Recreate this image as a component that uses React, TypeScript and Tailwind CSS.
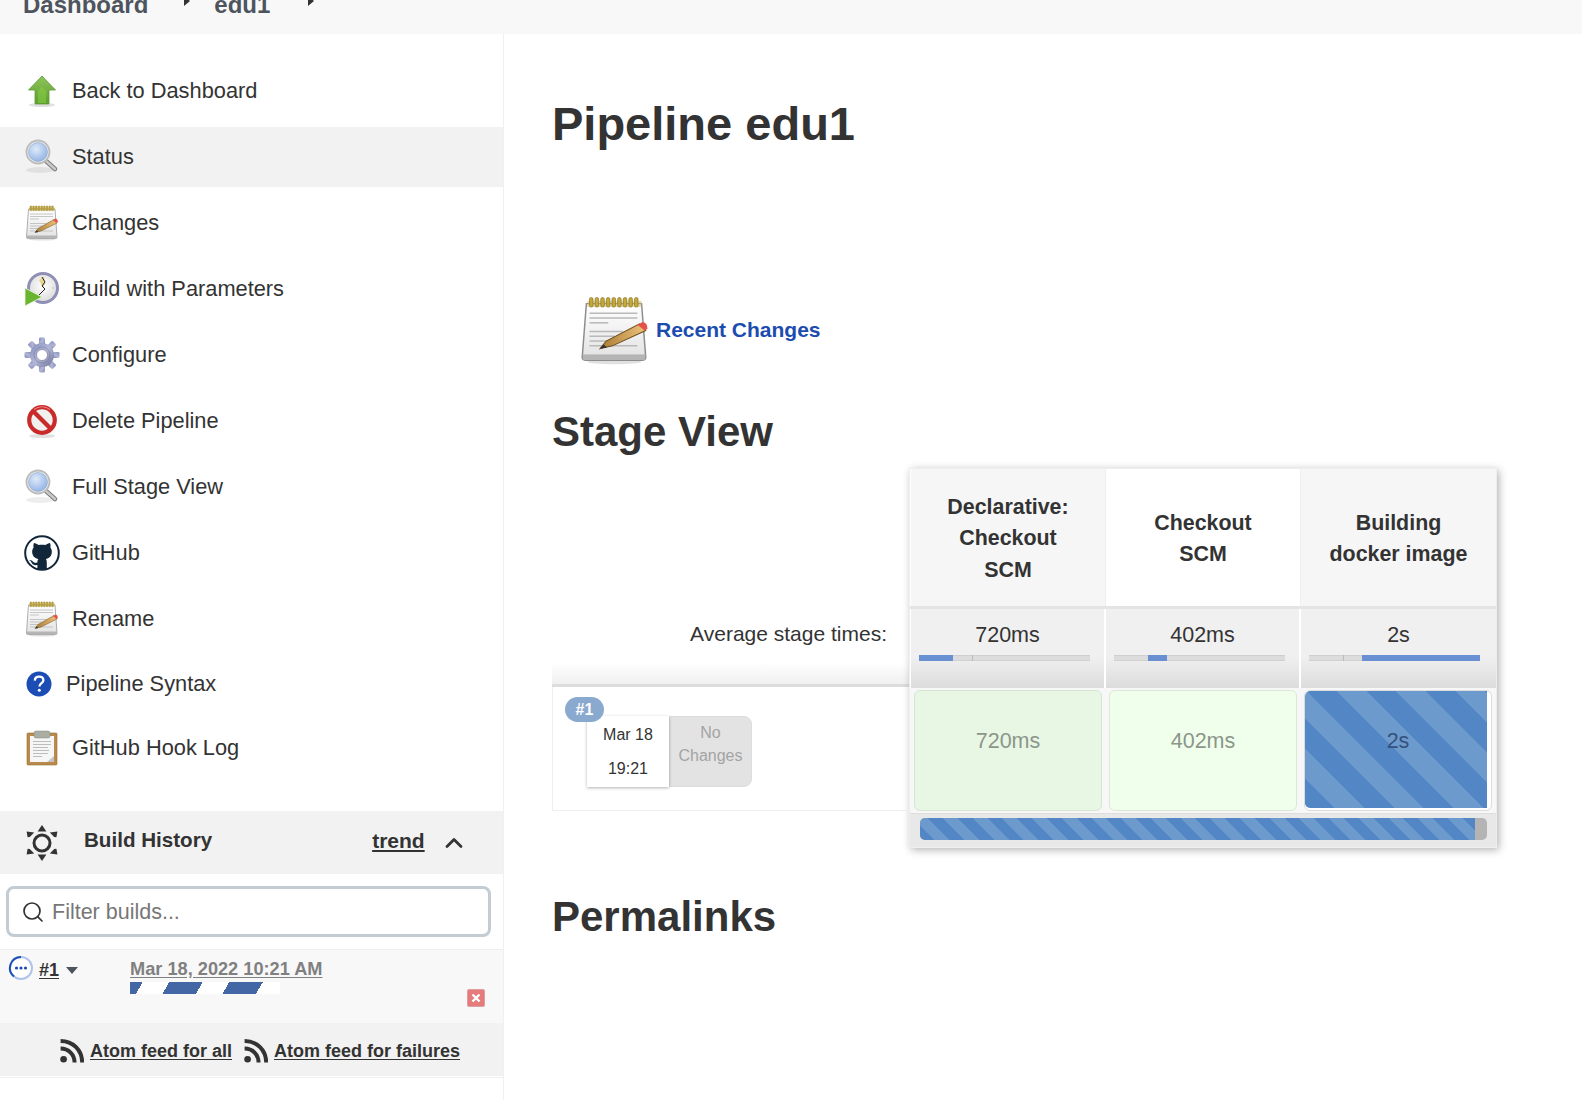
import { ChevronUp, Search } from 'lucide-react'
import type { ReactNode } from 'react'

const stripesBig =
  'bg-[repeating-linear-gradient(45deg,#5386c4_0,#5386c4_21px,#6d9acd_21px,#6d9acd_42px)]'

function ArrowIcon() {
  return (
    <svg viewBox="0 0 36 36" className="w-9 h-9">
      <defs>
        <linearGradient id="arrow-g" x1="0" y1="0" x2="0" y2="1">
          <stop offset="0" stopColor="#8fc45c" />
          <stop offset="1" stopColor="#5c9e2c" />
        </linearGradient>
      </defs>
      <ellipse cx="18" cy="32" rx="13" ry="2" fill="#000" opacity="0.12" />
      <path d="M18 3 L31.5 17 H25 V31 H11 V17 H4.5 Z" fill="url(#arrow-g)" stroke="#5f9a3b" strokeWidth="0.8" />
      <path d="M14 18 L18 13 L22 18 V30 H14 Z" fill="#86cc42" opacity="0.6" />
    </svg>
  )
}

function GlassIcon({ id }: { id: string }) {
  return (
    <svg viewBox="0 0 36 36" className="w-9 h-9">
      <defs>
        <radialGradient id={id} cx="0.4" cy="0.35" r="0.7">
          <stop offset="0" stopColor="#dfeafa" />
          <stop offset="1" stopColor="#90b2e4" />
        </radialGradient>
      </defs>
      <ellipse cx="16" cy="31" rx="14" ry="3" fill="#000" opacity="0.07" />
      <path d="M22 22 L31 30" stroke="#777" strokeWidth="4.5" strokeLinecap="round" />
      <path d="M22 22 L31 30" stroke="#c9c9c9" strokeWidth="2.6" strokeLinecap="round" />
      <circle cx="14" cy="13" r="11.5" fill="#eee" stroke="#bcbcbc" strokeWidth="1.8" />
      <circle cx="14" cy="13" r="9.5" fill={`url(#${id})`} stroke="#8ea7cc" strokeWidth="0.6" />
    </svg>
  )
}

function NotepadIcon({ id, big }: { id: string; big?: boolean }) {
  return (
    <svg
      viewBox="0 0 36 36"
      preserveAspectRatio="none"
      className={big ? 'w-[75px] h-[69px] -my-[1.5px] shrink-0' : 'w-9 h-9'}
    >
      <defs>
        <linearGradient id={id} x1="0" y1="0" x2="0" y2="1">
          <stop offset="0" stopColor="#ffffff" />
          <stop offset="1" stopColor="#e2e2e2" />
        </linearGradient>
        <linearGradient id={`${id}-p`} x1="0" y1="0" x2="1" y2="0">
          <stop offset="0" stopColor="#a87b35" />
          <stop offset="1" stopColor="#eec27a" />
        </linearGradient>
      </defs>
      <ellipse cx="18" cy="34.4" rx="13" ry="1.2" fill="#000" opacity="0.12" />
      <path d="M4.5 4 H31 L33 32 Q33 33.5 31.5 33.5 H4 Q2.5 33.5 2.5 32 Z" fill={`url(#${id})`} stroke="#8c8c8c" strokeWidth="0.7" />
      <rect x="2.8" y="30.5" width="30" height="2.8" fill="#b5b5b5" />
      <rect x="5" y="2.5" width="26" height="3.2" fill="#cdb560" opacity="0.5" />
      {[6, 8.7, 11.4, 14.1, 16.8, 19.5, 22.2, 24.9, 27.6].map(x => (
        <rect key={x} x={x} y="0.8" width="1.7" height="5" rx="0.8" fill="#c4a93a" stroke="#7d6a1c" strokeWidth="0.3" />
      ))}
      <g stroke="#b9b9b9" strokeWidth="0.8">
        <path d="M6 9 H29" />
        <path d="M6 11.5 H29" />
        <path d="M6 14 H15" />
        <path d="M6 18.5 H22" />
        <path d="M6 21 H18" />
        <path d="M6 23.5 H16" />
        <path d="M6 26 H29" />
      </g>
      <path d="M11 27.5 L14 23.5 L30 14.5 L33 18 L17 26 Z" fill={`url(#${id}-p)`} stroke="#6d4d1a" strokeWidth="0.5" />
      <path d="M29 15 L31.5 13.6 Q34 14.2 33.8 17.2 L32.4 18 Z" fill="#e4534a" />
      <path d="M11 27.5 L12.7 25.2 L14.4 26.9 Z" fill="#333" />
    </svg>
  )
}

function ClockIcon() {
  return (
    <svg viewBox="0 0 36 36" className="w-9 h-9">
      <defs>
        <radialGradient id="clock-g" cx="0.5" cy="0.4" r="0.6">
          <stop offset="0" stopColor="#ffffff" />
          <stop offset="1" stopColor="#dddddd" />
        </radialGradient>
      </defs>
      <circle cx="19" cy="17" r="16" fill="#8f8fb5" />
      <circle cx="19" cy="17" r="13" fill="url(#clock-g)" />
      <path d="M19 17 L15 9 L20 5 L21 13 Z" fill="#e6d690" />
      <path d="M18 6 L21 11 L18 15 L21 18 L15 24" fill="none" stroke="#222" strokeWidth="1" />
      <circle cx="29" cy="17" r="0.8" fill="#bbb" />
      <path d="M1 17 L18 26 L1 35 Z" fill="#6ab52f" stroke="#eef7e4" strokeWidth="0.8" />
    </svg>
  )
}

function GearIcon() {
  const teeth = [0, 45, 90, 135, 180, 225, 270, 315]
  return (
    <svg viewBox="0 0 36 36" className="w-9 h-9">
      <defs>
        <linearGradient id="gear-g" x1="0" y1="0" x2="1" y2="1">
          <stop offset="0" stopColor="#858cbd" />
          <stop offset="0.5" stopColor="#b3b7d6" />
          <stop offset="1" stopColor="#6a6f96" />
        </linearGradient>
      </defs>
      <g fill="url(#gear-g)">
        {teeth.map(a => (
          <rect key={a} x="15" y="0.5" width="6" height="9" rx="1.4" transform={`rotate(${a} 18 18)`} />
        ))}
        <circle cx="18" cy="18" r="12" />
      </g>
      <circle cx="18" cy="18" r="8" fill="none" stroke="#6e7396" strokeWidth="1" opacity="0.5" />
      <circle cx="18" cy="18" r="5.5" fill="#fff" stroke="#6e7396" strokeWidth="0.6" />
    </svg>
  )
}

function NoIcon() {
  return (
    <svg viewBox="0 0 36 36" className="w-9 h-9">
      <ellipse cx="18" cy="33" rx="13" ry="2" fill="#000" opacity="0.12" />
      <circle cx="18" cy="17" r="12.8" fill="#f0f0f0" stroke="#c92a2a" strokeWidth="4.2" />
      <path d="M9 8 L27 26" stroke="#c92a2a" strokeWidth="4.4" />
      <path d="M10 6.5 A13 13 0 0 1 26 6.5" fill="none" stroke="#e98080" strokeWidth="1.2" />
    </svg>
  )
}

function GithubIcon() {
  return (
    <svg viewBox="0 0 36 36" className="w-9 h-9">
      <circle cx="18" cy="18" r="16.8" fill="#fff" stroke="#12263a" strokeWidth="2" />
      <path
        d="M10 8 C11.5 8 13 9 14.5 10 C16.5 9.5 19.5 9.5 21.5 10 C23 9 24.5 8 26 8 C26.6 9.5 26.8 11 26.4 12.4 C27.6 14 28 15.5 27.8 17.5 C27.4 21.5 25 23.4 21.8 24 C22.6 25 22.8 26 22.8 27.4 V34 H13.4 V30 C10.5 30.5 8.5 29.6 7.5 27.5 C7 26.4 6 25.6 5 25 C7 24.8 8.4 25.8 9.4 27 C10.6 28 12 28 13.4 27.6 C13.4 26 13.6 24.8 14.4 24 C11.2 23.4 8.6 21.5 8.2 17.5 C8 15.5 8.4 14 9.6 12.4 C9.2 11 9.4 9.5 10 8 Z"
        fill="#12263a"
      />
    </svg>
  )
}

function HelpIcon() {
  return (
    <svg viewBox="0 0 30 30" className="w-[30px] h-[30px]">
      <circle cx="15" cy="15" r="12.5" fill="#1c4db4" />
      <path d="M10.8 11.6 C10.9 8.9 12.7 7.6 15.1 7.6 C17.6 7.6 19.4 9 19.4 11.2 C19.4 14.2 15.4 14.2 15.4 17.6" fill="none" stroke="#fff" strokeWidth="2.3" />
      <circle cx="15.3" cy="21.3" r="1.5" fill="#fff" />
    </svg>
  )
}

function ClipboardIcon() {
  return (
    <svg viewBox="0 0 36 36" className="w-9 h-9">
      <rect x="3" y="3" width="30" height="32" rx="1" fill="#b98a4c" stroke="#96702f" strokeWidth="0.6" />
      <path d="M6 6 H30 V32 H6 Z" fill="#f6f6f6" />
      <rect x="10" y="1" width="16" height="7" rx="2" fill="#a9ada2" stroke="#85887e" strokeWidth="0.5" />
      <g stroke="#bdbdbd" strokeWidth="1">
        <path d="M9 11.5 H27" />
        <path d="M9 14.5 H27" />
        <path d="M9 17.5 H24" />
        <path d="M9 20.5 H25" />
        <path d="M9 23.5 H24" />
        <path d="M9 26.5 H18" />
      </g>
      <path d="M23 32 L30 26 V32 Z" fill="#c4c4c4" />
    </svg>
  )
}

function HistoryIcon() {
  return (
    <svg viewBox="0 0 36 36" className="w-9 h-9">
      <circle cx="18" cy="18" r="8" fill="none" stroke="#333" strokeWidth="3" />
      <g fill="#333">
        <path d="M18 0 L22.4 6.4 H13.6 Z" />
        <path d="M18 36 L22.4 29.6 H13.6 Z" />
        <path d="M2.6 6.6 L10.2 7.4 L5.8 12 L3.6 12.2 Z" />
        <path d="M33.4 6.6 L25.8 7.4 L30.2 12 L32.4 12.2 Z" />
        <path d="M2.6 29.4 L10.2 28.6 L5.8 24 L3.6 23.8 Z" />
        <path d="M33.4 29.4 L25.8 28.6 L30.2 24 L32.4 23.8 Z" />
      </g>
    </svg>
  )
}

function RssIcon() {
  return (
    <svg viewBox="0 0 24 24" className="w-6 h-6 shrink-0">
      <circle cx="3.6" cy="20.2" r="3.3" fill="#333" />
      <path d="M0.6 9.6 C8.6 9.6 14.6 15.6 14.6 23.6" fill="none" stroke="#333" strokeWidth="4" />
      <path d="M0.6 2 C13 2 22.2 11.2 22.2 23.6" fill="none" stroke="#333" strokeWidth="4" />
    </svg>
  )
}

function Triangle() {
  return <div className="w-0 h-0 border-y-[5px] border-y-transparent border-l-[6px] border-l-[#333]" />
}

function NavItem({ icon, label, active, className }: { icon: ReactNode; label: string; active?: boolean; className?: string }) {
  return (
    <a className={`flex items-center h-[60px] pl-6 gap-3 ${active ? 'bg-[#f2f2f2]' : ''} ${className ?? ''}`}>
      {icon}
      <span className="text-[21.8px] text-[#333]">{label}</span>
    </a>
  )
}

function MiniBar({ from, width, tick }: { from: number; width: number; tick: number }) {
  return (
    <div className="relative h-[6px] w-[171px] ml-[8px] bg-[#dcdcdc] border-y border-[#d0d0d0]">
      <div className="absolute top-[-1px] h-[6px] w-px bg-[#bbb]" style={{ left: tick }} />
      <div className="absolute top-[-1px] h-[6px] bg-[#6a90d4]" style={{ left: from, width }} />
    </div>
  )
}

function AvgCell({ time, from, width, tick, className }: { time: string; from: number; width: number; tick: number; className?: string }) {
  return (
    <div className={`flex flex-col h-full pt-3 bg-gradient-to-b from-[#f0f0f0] from-60% to-[#dcdcdc] ${className ?? ''}`}>
      <div className="text-center text-[21.5px] leading-[28px] text-[#333]">{time}</div>
      <div className="mt-[6px]">
        <MiniBar from={from} width={width} tick={tick} />
      </div>
    </div>
  )
}

export default function App() {
  return (
    <div className="w-[1582px] h-[1100px] overflow-hidden bg-white font-['Liberation_Sans',Arial,sans-serif] text-[#333]">
      {/* breadcrumbs, page is scrolled so it is cut off */}
      <div className="h-[34px] bg-[#f8f8f8] overflow-hidden">
        <div className="flex items-center pl-[23px] mt-[-12px] h-[34px] text-[24px] font-bold text-[#4d545d]">
          <span>Dashboard</span>
          <span className="ml-[36px] mt-[-9px]"><Triangle /></span>
          <span className="ml-[24px]">edu1</span>
          <span className="ml-[38px] mt-[-9px]"><Triangle /></span>
        </div>
      </div>

      <div className="flex h-[1066px]">
        <aside className="w-[504px] shrink-0 border-r border-[#f0f0f0] flex flex-col">
          <div className="flex flex-col gap-[6px] pt-[27px]">
            <NavItem icon={<ArrowIcon />} label="Back to Dashboard" />
            <NavItem icon={<GlassIcon id="glass-1" />} label="Status" active />
            <NavItem icon={<NotepadIcon id="note-1" />} label="Changes" />
            <NavItem icon={<ClockIcon />} label="Build with Parameters" />
            <NavItem icon={<GearIcon />} label="Configure" />
            <NavItem icon={<NoIcon />} label="Delete Pipeline" />
            <NavItem icon={<GlassIcon id="glass-2" />} label="Full Stage View" />
            <NavItem icon={<GithubIcon />} label="GitHub" />
            <NavItem icon={<NotepadIcon id="note-2" />} label="Rename" />
            <NavItem icon={<HelpIcon />} label="Pipeline Syntax" className="-mt-[1px]" />
            <NavItem icon={<ClipboardIcon />} label="GitHub Hook Log" className="-mt-[2px]" />
          </div>

          <div className="mt-[33px] h-[63px] bg-[#f2f2f2] flex items-center pl-6">
            <HistoryIcon />
            <span className="ml-[24px] mt-[-4px] text-[20.6px] font-bold">Build History</span>
            <a className="ml-[160px] mt-[-4px] text-[21px] font-bold underline underline-offset-2">trend</a>
            <ChevronUp className="ml-[15px] w-7 h-7 text-[#333]" strokeWidth={2.4} />
          </div>

          <div className="mx-[6px] mt-3 h-[51px] w-[485px] border-[3px] border-[#c3ccd2] rounded-[8px] flex items-center pl-[12px]">
            <Search className="w-6 h-6 text-[#333]" strokeWidth={1.7} />
            <span className="ml-[7px] mt-[2px] text-[21.5px] text-[#777]">Filter builds...</span>
          </div>

          <div className="relative mt-3 h-[74px] bg-[#f8f8f8] border-t border-[#eee]">
            <div className="flex items-start">
              <svg viewBox="0 0 26 26" className="w-[26px] h-[26px] ml-[8px] mt-[5px]">
                <circle cx="13" cy="13" r="11" fill="#fff" stroke="#aec4ea" strokeWidth="2" />
                <path d="M13 2 A11 11 0 0 0 6 21.5" fill="none" stroke="#1c4db4" strokeWidth="2" />
                <circle cx="8.5" cy="13" r="1.6" fill="#1c4db4" />
                <circle cx="13" cy="13" r="1.6" fill="#1c4db4" />
                <circle cx="17.5" cy="13" r="1.6" fill="#1c4db4" />
              </svg>
              <a className="ml-[5px] mt-[7px] text-[18px] font-bold underline underline-offset-2">#1</a>
              <div className="ml-[7px] mt-[17px] w-0 h-0 border-x-[6px] border-x-transparent border-t-[7px] border-t-[#4d545d]" />
              <div className="ml-[52px] mt-[6px]">
                <a className="block text-[18.2px] font-bold text-[#808080] underline underline-offset-2 whitespace-nowrap">Mar 18, 2022 10:21 AM</a>
                <div className="mt-[-1px] w-[150px] h-3 bg-[repeating-linear-gradient(120deg,#4267a4_0,#4267a4_11px,#fff_11px,#fff_34px,#4267a4_34px,#4267a4_52px)]" />
              </div>
            </div>
            <div className="absolute left-[467px] top-[39px] w-[18px] h-[18px] rounded-[2px] bg-[#e77a7a] border border-[#d8a0a0] flex items-center justify-center">
              <svg viewBox="0 0 12 12" className="w-3 h-3"><path d="M2.5 2.5 L9.5 9.5 M9.5 2.5 L2.5 9.5" stroke="#fff" strokeWidth="2.4" /></svg>
            </div>
          </div>

          <div className="h-[53px] bg-[#f2f2f2] border-b border-[#f0f0f0] flex items-center pl-[60px] pt-[4px] text-[18px] font-bold text-[#333]">
            <RssIcon />
            <a className="ml-[6px] underline underline-offset-2">Atom feed for all</a>
            <span className="ml-3"><RssIcon /></span>
            <a className="ml-[6px] underline underline-offset-2">Atom feed for failures</a>
          </div>
          <div className="h-px mt-px bg-[#eee]" />
        </aside>

        <main className="flex-1 pl-[49px]">
          <h1 className="mt-[60px] -ml-px text-[47px] leading-[60px] font-bold">Pipeline edu1</h1>

          <div className="mt-[143px] ml-[24px] flex items-center">
            <NotepadIcon id="note-big" big />
            <a className="ml-[4px] text-[21px] font-bold text-[#1c4cb0]">Recent Changes</a>
          </div>

          <h2 className="mt-[44px] -ml-px text-[42px] leading-[50px] font-bold">Stage View</h2>

          <div className="mt-[11px] flex items-start">
            <div className="w-[357px] -ml-px shrink-0">
              <div className="h-[143px]" />
              <div className="h-[76px] pt-[9px] pr-[22px] text-right text-[21px] leading-[28px] bg-gradient-to-b from-white from-70% to-[#f0f0f0] border-b-[3px] border-[#ddd]">
                Average stage times:
              </div>
              <div className="relative h-[124px] border-l border-b border-[#eee]">
                <div className="absolute left-[12px] top-[10px] z-10 w-[39px] h-[25px] rounded-full bg-[#8aa9cf] flex items-center justify-center text-[16px] font-bold text-white">
                  #1
                </div>
                <div className="flex ml-[34px] pt-[29px]">
                  <div className="w-[82px] h-[71px] bg-white shadow-[0_1px_3px_rgba(0,0,0,0.3)] flex flex-col items-center justify-center gap-[13px] text-[16px] leading-[21px] z-[1]">
                    <span>Mar 18</span>
                    <span>19:21</span>
                  </div>
                  <div className="w-[83px] h-[71px] bg-[#e3e3e3] border border-[#dcdcdc] rounded-r-[8px] text-center text-[16px] leading-[23px] text-[#a3a3a3] pt-[4px]">
                    No<br />Changes
                  </div>
                </div>
              </div>
            </div>

            <div className="w-[588px] shrink-0 shadow-[2px_2px_8px_rgba(0,0,0,0.3)] border border-[#eee] bg-white">
              <div className="grid grid-cols-[195px_195px_195px] h-[140px] border-b-[3px] border-[#e4e4e4] pl-px">
                <div className="bg-[#f6f6f6] flex items-center justify-center pt-[3px] text-center text-[21.4px] font-bold leading-[31.5px] border-r border-[#f0f0f0]">
                  <span>Declarative:<br />Checkout<br />SCM</span>
                </div>
                <div className="bg-white flex items-center justify-center pt-[3px] text-center text-[21.4px] font-bold leading-[31.5px] border-r border-[#f0f0f0]">
                  <span>Checkout<br />SCM</span>
                </div>
                <div className="bg-[#f6f6f6] flex items-center justify-center pt-[3px] text-center text-[21.4px] font-bold leading-[31.5px]">
                  <span>Building<br />docker image</span>
                </div>
              </div>

              <div className="grid grid-cols-[195px_195px_195px] h-[79px] pl-px">
                <AvgCell time="720ms" from={0} width={34} tick={53} className="border-r-2 border-white" />
                <AvgCell time="402ms" from={34} width={19} tick={34} className="border-r-2 border-white" />
                <AvgCell time="2s" from={53} width={118} tick={34} />
              </div>

              <div className="grid grid-cols-[195px_195px_195px] h-[125px] bg-[#f7f7f7] pl-px py-[2px]">
                <div className="pl-[3px] pr-[4px]">
                  <div className="h-full bg-[#e8f7e4] border border-[#d5e5d2] rounded-[6px] flex justify-center pt-[36px] text-[21.5px] leading-[28px] text-[#8b968b]">720ms</div>
                </div>
                <div className="pl-[3px] pr-[4px]">
                  <div className="h-full bg-[#f0ffeb] border border-[#dbe8d6] rounded-[6px] flex justify-center pt-[36px] text-[21.5px] leading-[28px] text-[#8b968b]">402ms</div>
                </div>
                <div className="pl-[3px] pr-[4px]">
                  <div className="relative h-full bg-white border border-[#dcdcdc] rounded-[6px] pr-[4px] pb-[2px] overflow-hidden">
                    <div className={`h-full rounded-l-[5px] ${stripesBig}`} />
                    <div className="absolute inset-x-0 top-[36px] text-center text-[21.5px] leading-[28px] text-[#34527d]">2s</div>
                  </div>
                </div>
              </div>

              <div className="h-[34px] bg-[#e8e8e8] border-t border-[#dedede] pl-[10px] pr-[9px] pt-[4px]">
                <div className="h-[22px] rounded-[5px] bg-[#b4b4b4] overflow-hidden">
                  <div className="h-full w-[555px] bg-[repeating-linear-gradient(45deg,#5386c4_0,#5386c4_10.5px,#6d9acd_10.5px,#6d9acd_21px)]" />
                </div>
              </div>
            </div>
          </div>

          <h2 className="mt-[44px] -ml-px text-[42px] leading-[50px] font-bold">Permalinks</h2>
        </main>
      </div>
    </div>
  )
}
